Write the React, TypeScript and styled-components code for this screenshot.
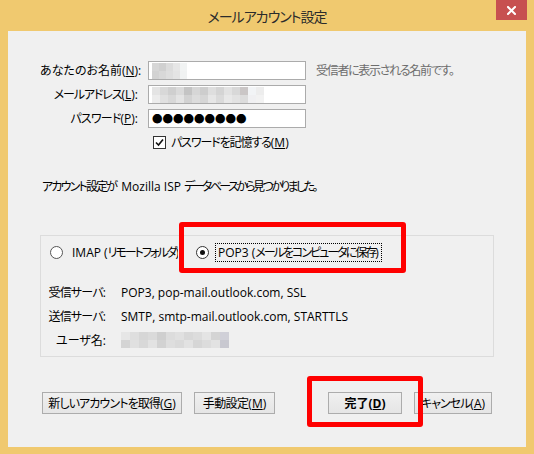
import styled, { createGlobalStyle } from 'styled-components';

const GlobalStyle = createGlobalStyle`
  html, body {
    margin: 0;
    padding: 0;
    background: #f0c96f;
  }
  body {
    font-family: 'Open Sans', 'Noto Sans CJK JP', sans-serif;
    font-size: 12px;
    font-feature-settings: 'palt' 1;
    color: #000;
  }
`;

const Window = styled.div`
  position: relative;
  width: 534px;
  height: 454px;
  box-sizing: border-box;
  padding: 0 8px 7px 8px;
  display: flex;
  flex-direction: column;
  background: #f0c96f;
`;

const TitleBar = styled.div`
  height: 31px;
  display: grid;
  grid-template-columns: 1fr auto 1fr;
  align-items: start;
`;

const Title = styled.div`
  grid-column: 2;
  padding-top: 6px;
  font-family: 'Noto Sans CJK JP', sans-serif;
  font-size: 14px;
  line-height: 20px;
  letter-spacing: -1px;
  color: #2b2b2b;
`;

const CloseButton = styled.div`
  grid-column: 3;
  justify-self: end;
  margin-right: -1px;
  width: 31px;
  height: 20px;
  background: #c75050;
  display: flex;
  align-items: center;
  justify-content: center;
`;

const Content = styled.div`
  flex: 1;
  background: #f0f0f0;
  padding: 30px 32px 0 32px;
  display: flex;
  flex-direction: column;
`;

/* Japanese runs: the UI font of the original has narrower kana */
const Ja = styled.span<{ $ls?: number }>`
  letter-spacing: ${(p) => p.$ls ?? -1}px;
`;

const Form = styled.div`
  display: grid;
  grid-template-columns: 98px 158px auto;
  column-gap: 10px;
  row-gap: 5px;
  grid-auto-rows: 19px;
  align-items: center;
`;

const FieldLabel = styled.div`
  text-align: right;
  white-space: nowrap;
  line-height: 16px;
`;

const Field = styled.div`
  height: 19px;
  box-sizing: border-box;
  background: #fff;
  border: 1px solid #ababab;
  display: flex;
  align-items: center;
  padding-left: 3px;
`;

const Dots = styled.span`
  font-family: 'Noto Sans CJK JP', sans-serif;
  font-size: 10.5px;
  line-height: 12px;
  letter-spacing: 0;
  font-feature-settings: normal;
`;

const Hint = styled.div`
  color: #6d6d6d;
  white-space: nowrap;
  line-height: 16px;
  letter-spacing: -1.3px;
`;

const Mosaic = styled.div<{ $cols: number; $cell: number }>`
  display: grid;
  grid-template-columns: repeat(${(p) => p.$cols}, ${(p) => p.$cell}px);
  grid-auto-rows: 8px;
`;

const Cell = styled.span<{ $c: string }>`
  background: ${(p) => p.$c};
`;

const CheckRow = styled.label`
  grid-column: 2 / 4;
  display: flex;
  align-items: center;
  gap: 5px;
  padding-left: 5px;
  line-height: 16px;
`;

const CheckBox = styled.span`
  width: 13px;
  height: 13px;
  box-sizing: border-box;
  border: 1px solid #333;
  background: #fff;
  display: flex;
  align-items: center;
  justify-content: center;
`;

const Key = styled.span`
  text-decoration: underline;
`;

const Notice = styled.div`
  margin-top: 27px;
  line-height: 16px;
  padding-left: 2px;
  white-space: nowrap;
`;

const GroupBox = styled.div`
  margin-top: 40px;
  border: 1px solid #dcdcdc;
  padding: 7px 0 4px 0;
`;

const RadioRow = styled.div`
  height: 19px;
  display: flex;
  align-items: center;
  padding-left: 9px;
`;

const RadioOption = styled.div<{ $width?: number }>`
  display: flex;
  align-items: center;
  gap: 6px;
  ${(p) => (p.$width ? `width: ${p.$width}px; margin-right: 17px;` : '')}
`;

const RadioCircle = styled.span<{ $checked?: boolean }>`
  flex: none;
  width: 13px;
  height: 13px;
  box-sizing: border-box;
  border-radius: 50%;
  border: 1px solid ${(p) => (p.$checked ? '#333' : '#555')};
  background: #fff;
  display: flex;
  align-items: center;
  justify-content: center;
  &::after {
    content: '';
    display: ${(p) => (p.$checked ? 'block' : 'none')};
    width: 5px;
    height: 5px;
    border-radius: 50%;
    background: #111;
  }
`;

const RadioText = styled.span<{ $focused?: boolean }>`
  white-space: nowrap;
  overflow: hidden;
  line-height: 17px;
  padding: 0 2px;
  border: 1px dotted ${(p) => (p.$focused ? '#000' : 'transparent')};
  min-width: 0;
`;

const InfoGrid = styled.div`
  margin-top: 18px;
  display: grid;
  grid-template-columns: 65px 1fr;
  column-gap: 15px;
  grid-auto-rows: 24px;
  align-items: center;
`;

const InfoLabel = styled.div`
  text-align: right;
  white-space: nowrap;
`;

const InfoValue = styled.div`
  white-space: nowrap;
`;

const ButtonRow = styled.div`
  margin-top: 35px;
  padding: 0 2px;
  display: flex;
  justify-content: space-between;
`;

const ButtonGroup = styled.div`
  display: flex;
  gap: 12px;
`;

const Button = styled.div<{ $width: number; $primary?: boolean }>`
  width: ${(p) => p.$width}px;
  height: 22px;
  box-sizing: border-box;
  border: 1px solid #acacac;
  background: linear-gradient(#f0f0f0, #e5e5e5);
  display: flex;
  align-items: center;
  justify-content: center;
  white-space: nowrap;
  font-weight: ${(p) => (p.$primary ? 700 : 400)};
`;

const Highlight = styled.div<{ $x: number; $y: number; $w: number; $h: number }>`
  position: absolute;
  left: ${(p) => p.$x}px;
  top: ${(p) => p.$y}px;
  width: ${(p) => p.$w}px;
  height: ${(p) => p.$h}px;
  box-sizing: border-box;
  border: 5px solid #ff0000;
  border-radius: 3px;
  pointer-events: none;
`;

const nameBlur = [
  '#d6d6d6', '#d0d0d0', '#dcdcdc', '#e6e6e6', '#f1f3f3',
  '#d2d2d2', '#d8d8d8', '#dedede', '#e4e4e4', '#f0f2f2',
];

const mailBlur = [
  '#e4e4e4', '#d8d8d8', '#cfcfcf', '#dadada', '#c4c4c4', '#d6d6d6', '#cdcdcd', '#dedede', '#d4d4d4', '#e2e2e2', '#d8d8d8', '#cac6c6', '#f2f4f6', '#ededed',
  '#ececec', '#e0e0e0', '#d8d8d8', '#e4e4e4', '#d2d2d2', '#dcdcdc', '#d6d6d6', '#e6e6e6', '#dadada', '#e8e8e8', '#e2e2e2', '#dcdcdc', '#f0f0f2', '#f2f2f2',
];

const userBlur = [
  '#e6e6e6', '#dedede', '#d6d6d6', '#dadada', '#cfcfcf', '#dcdcdc', '#e0e0e0', '#d8d8d8', '#dcdcdc', '#e4e4e4', '#d4d4d4', '#d0d0d8',
  '#d4d4d4', '#e0e0e0', '#d8d8d8', '#e2e2e2', '#d2d2d2', '#dedede', '#dadada', '#e2e2e2', '#d6d6d6', '#dcdcdc', '#e2e2e2', '#c8c8d0',
];

const Blur = ({ colors, cols, cell }: { colors: string[]; cols: number; cell: number }) => (
  <Mosaic $cols={cols} $cell={cell}>
    {colors.map((c, i) => (
      <Cell key={i} $c={c} />
    ))}
  </Mosaic>
);

export default function App() {
  return (
    <>
      <GlobalStyle />
      <Window>
        <TitleBar>
          <Title>メールアカウント設定</Title>
          <CloseButton>
            <svg width="9" height="9" viewBox="0 0 9 9">
              <path d="M1 1 L8 8 M8 1 L1 8" stroke="#fff" strokeWidth="2" strokeLinecap="square" />
            </svg>
          </CloseButton>
        </TitleBar>
        <Content>
          <Form>
            <FieldLabel>
              あなたのお名前(<Key>N</Key>):
            </FieldLabel>
            <Field>
              <Blur colors={nameBlur} cols={5} cell={7} />
            </Field>
            <Hint>受信者に表示される名前です。</Hint>

            <FieldLabel>
              <Ja $ls={-1.1}>メールアドレス</Ja>(<Key>L</Key>):
            </FieldLabel>
            <Field>
              <Blur colors={mailBlur} cols={14} cell={8} />
            </Field>
            <span />

            <FieldLabel>
              <Ja $ls={-0.8}>パスワード</Ja>(<Key>P</Key>):
            </FieldLabel>
            <Field>
              <Dots>●●●●●●●●●</Dots>
            </Field>
            <span />

            <span />
            <CheckRow>
              <CheckBox>
                <svg width="9" height="9" viewBox="0 0 9 9">
                  <path d="M1 4.5 L3.5 7 L8 1.5" fill="none" stroke="#111" strokeWidth="1.6" />
                </svg>
              </CheckBox>
              <span>
                <Ja $ls={-1.1}>パスワードを記憶する</Ja>(<Key>M</Key>)
              </span>
            </CheckRow>
          </Form>

          <Notice>
            <Ja $ls={-1.8}>アカウント設定</Ja>が Mozilla ISP <Ja $ls={-2.6}>データベースから見つかりました。</Ja>
          </Notice>

          <GroupBox>
            <RadioRow>
              <RadioOption $width={129}>
                <RadioCircle />
                <RadioText>
                  IMAP (<Ja $ls={-2}>リモートフォルダ</Ja>)
                </RadioText>
              </RadioOption>
              <RadioOption>
                <RadioCircle $checked />
                <RadioText $focused>
                  POP3 (<Ja $ls={-2}>メールをコンピュータに保存</Ja>)
                </RadioText>
              </RadioOption>
            </RadioRow>
            <InfoGrid>
              <InfoLabel>
                <Ja $ls={-0.8}>受信サーバ</Ja>:
              </InfoLabel>
              <InfoValue>POP3, pop-mail.outlook.com, SSL</InfoValue>
              <InfoLabel>
                <Ja $ls={-0.8}>送信サーバ</Ja>:
              </InfoLabel>
              <InfoValue>SMTP, smtp-mail.outlook.com, STARTTLS</InfoValue>
              <InfoLabel>ユーザ名:</InfoLabel>
              <InfoValue>
                <Blur colors={userBlur} cols={12} cell={9} />
              </InfoValue>
            </InfoGrid>
          </GroupBox>

          <ButtonRow>
            <ButtonGroup>
              <Button $width={140}>
                <Ja $ls={-0.9}>新しいアカウントを取得</Ja>(<Key>G</Key>)
              </Button>
              <Button $width={81}>
                <Ja $ls={-0.6}>手動設定</Ja>(<Key>M</Key>)
              </Button>
            </ButtonGroup>
            <ButtonGroup>
              <Button $width={74} $primary>
                完了(<Key>D</Key>)
              </Button>
              <Button $width={78}>
                <Ja>キャンセル</Ja>(<Key>A</Key>)
              </Button>
            </ButtonGroup>
          </ButtonRow>
        </Content>
        <Highlight $x={179} $y={222} $w={227} $h={51} />
        <Highlight $x={307} $y={376} $w={116} $h={51} />
      </Window>
    </>
  );
}
